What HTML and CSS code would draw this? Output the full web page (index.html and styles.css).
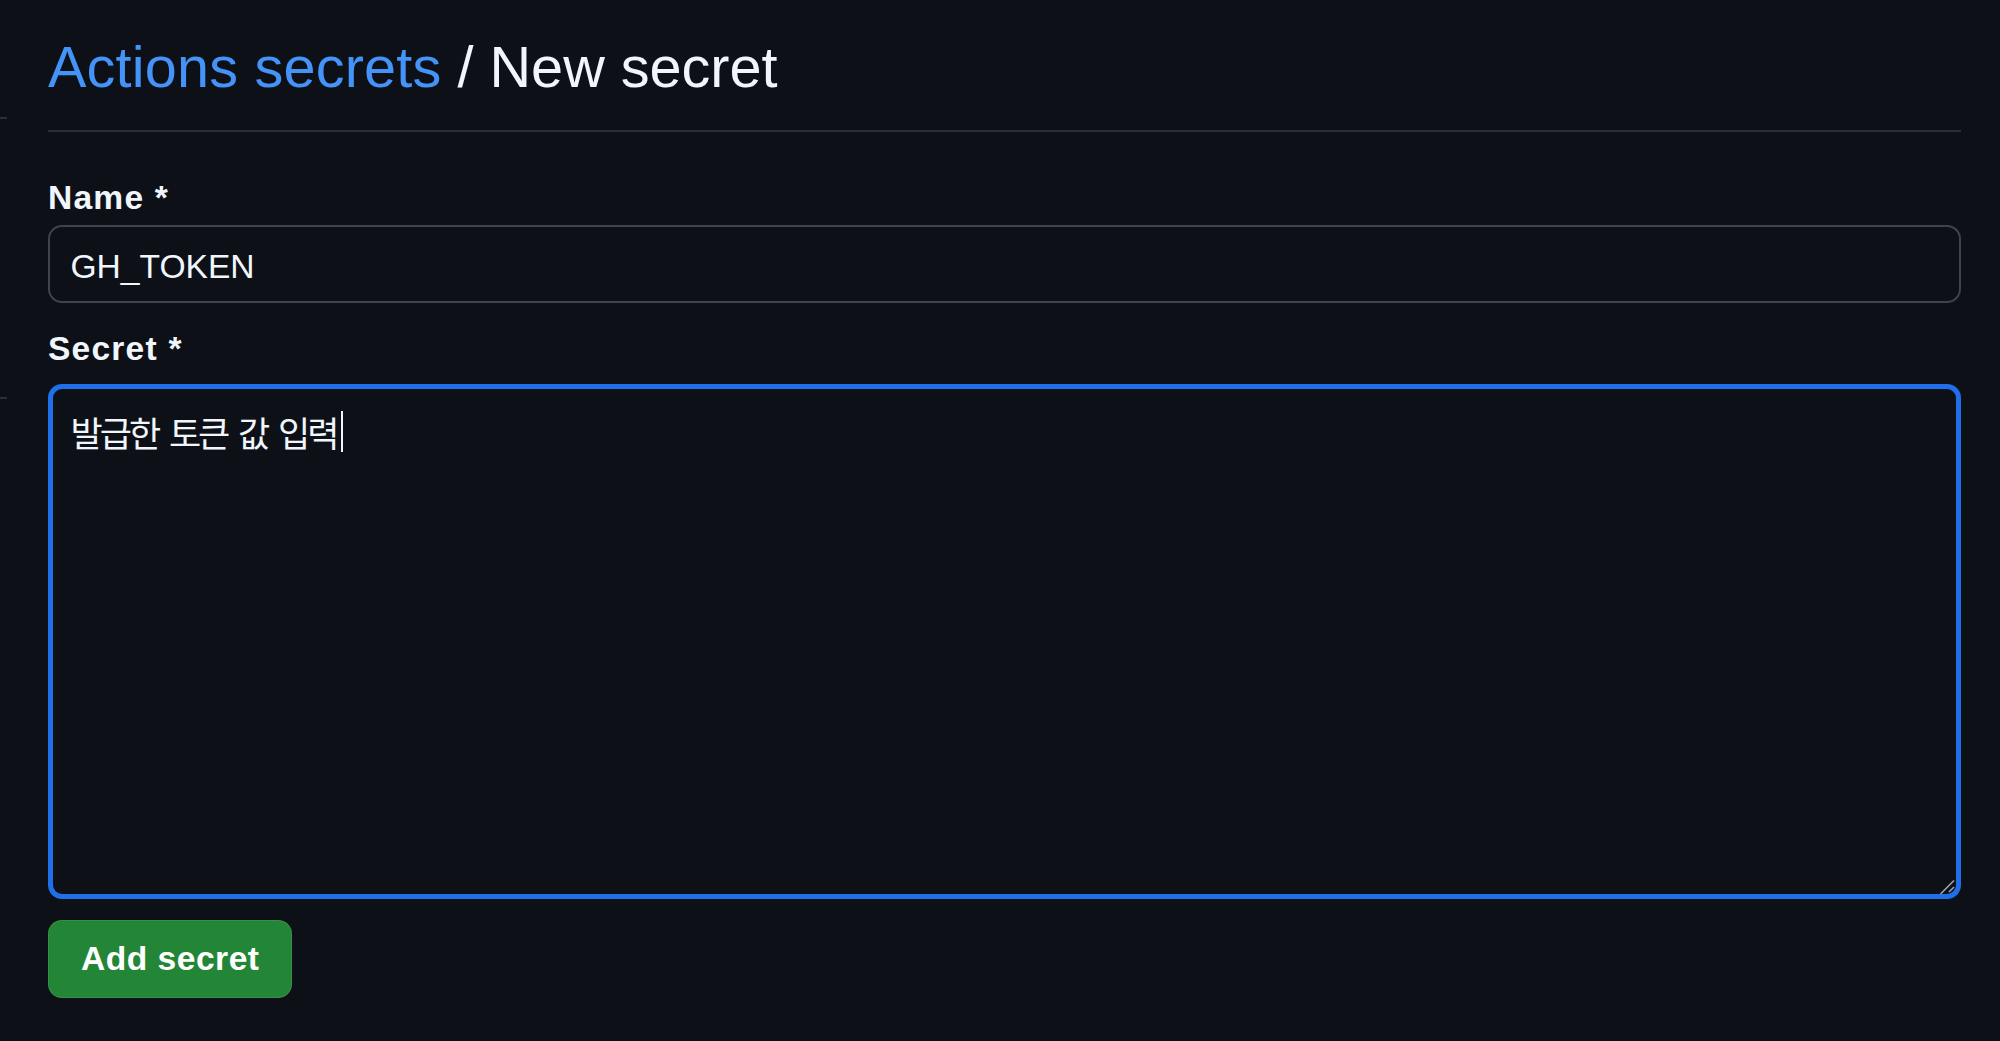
FILE: index.html
```html
<!DOCTYPE html>
<html lang="ko">
<head>
<meta charset="utf-8">
<title>New secret</title>
<link rel="stylesheet" href="styles.css">
</head>
<body>
<div class="layout">
  <aside class="sidebar">
    <div class="mark"></div>
    <div class="mark mark-second"></div>
  </aside>
  <main class="main">
    <div class="subhead">
      <h1 class="subhead-heading"><a class="crumb" href="#">Actions secrets</a> / New secret</h1>
    </div>
    <form class="secret-form">
      <div class="form-group">
        <label class="form-label" for="name">Name *</label>
        <input class="form-control" id="name" type="text" value="GH_TOKEN">
      </div>
      <div class="form-group form-group-secret">
        <label class="form-label form-label-secret" for="secret">Secret *</label>
        <div class="textarea" id="secret" role="textbox" aria-multiline="true">
          <span class="textarea-text">발급한 토큰 값 입력</span><span class="caret"></span>
          <svg class="resize-handle" width="16" height="16" viewBox="0 0 16 16">
            <line x1="1.5" y1="17" x2="15" y2="3.5" />
            <line x1="10" y1="15" x2="15" y2="10" />
          </svg>
        </div>
      </div>
      <button class="btn-primary" type="button">Add secret</button>
    </form>
  </main>
</div>
</body>
</html>
```

FILE: styles.css
```css
html, body {
  margin: 0;
  padding: 0;
  background: #0d1117;
}

body {
  font-family: "Liberation Sans", Arial, sans-serif;
  color: #f0f6fc;
  height: 1041px;
  overflow: hidden;
}

.layout {
  display: flex;
  min-height: 1041px;
}

.sidebar {
  flex: none;
  width: 8px;
  padding-top: 117px;
}

.mark {
  height: 2px;
  width: 7px;
  background: #2b3036;
}

.mark-second {
  margin-top: 278px;
}

.main {
  flex: 1;
  padding: 31px 39px 0 40px;
}

.subhead {
  padding-bottom: 27px;
  border-bottom: 2px solid #2b3036;
}

.subhead-heading {
  margin: 0;
  font-size: 57.6px;
  font-weight: 400;
  line-height: 72px;
  color: #f0f6fc;
}

.crumb {
  color: #4493f8;
  text-decoration: none;
  letter-spacing: 0.2px;
}

.secret-form {
  display: flex;
  flex-direction: column;
  align-items: flex-start;
}

.form-group {
  align-self: stretch;
  margin-top: 46px;
}

.form-group-secret {
  margin-top: 26px;
}

.form-label {
  display: block;
  font-size: 33.6px;
  font-weight: 700;
  line-height: 40px;
  letter-spacing: 1.2px;
  margin-bottom: 7px;
  color: #f0f6fc;
}

.form-label-secret {
  margin-bottom: 15px;
}

.form-control {
  display: block;
  box-sizing: border-box;
  width: 100%;
  height: 78px;
  margin: 0;
  padding: 5px 20px 0 20.5px;
  border: 2px solid #3d444d;
  border-radius: 14px;
  background: #0d1117;
  color: #f0f6fc;
  font-family: "Liberation Sans", Arial, sans-serif;
  font-size: 33.6px;
  outline: none;
}

.textarea {
  position: relative;
  box-sizing: border-box;
  width: 100%;
  height: 515px;
  padding: 22px 17.5px 0 17.5px;
  border: 5px solid #1f6feb;
  border-radius: 14px;
  background: #0d1117;
  font-family: "Noto Sans CJK KR", "Noto Sans", sans-serif;
  font-size: 35px;
  line-height: 41px;
  letter-spacing: -3px;
  word-spacing: 4px;
  color: #f0f6fc;
}

.textarea-text {
  vertical-align: top;
}

.caret {
  display: inline-block;
  vertical-align: top;
  width: 2px;
  height: 41px;
  margin-left: 4px;
  background: #f0f6fc;
}

.resize-handle {
  position: absolute;
  right: 1px;
  bottom: 1px;
  overflow: visible;
  stroke: #9aa3ad;
  stroke-width: 1.6;
  fill: none;
}

.btn-primary {
  margin-top: 21px;
  box-sizing: border-box;
  height: 78px;
  padding: 0 31px 0 32px;
  border: 1px solid rgba(240, 246, 252, 0.1);
  border-radius: 14px;
  background: #238636;
  color: #ffffff;
  font-family: "Liberation Sans", Arial, sans-serif;
  font-size: 33.6px;
  font-weight: 700;
  line-height: 76px;
  letter-spacing: 0.5px;
  cursor: pointer;
}
```
